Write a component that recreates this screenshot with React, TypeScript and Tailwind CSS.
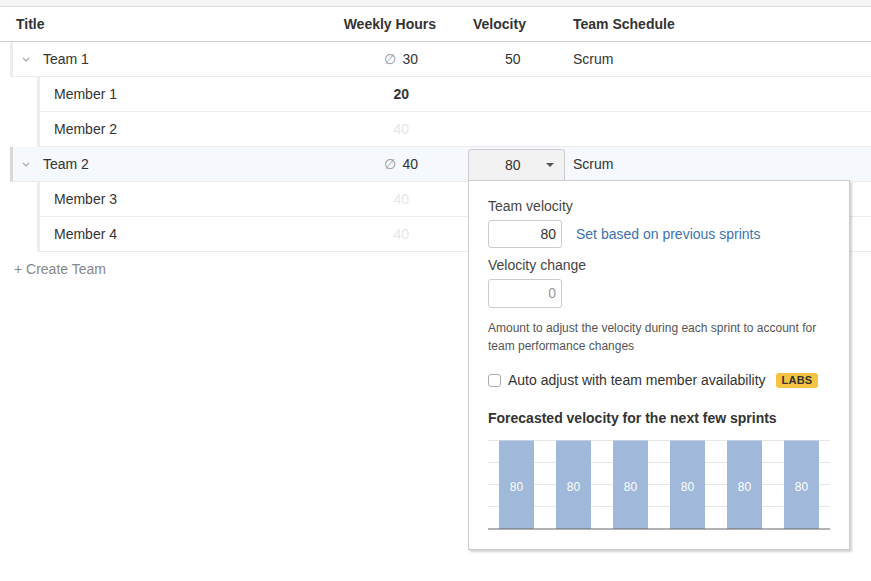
import React from 'react'

const TEAMS = [
  {
    name: 'Team 1',
    hours: 30,
    velocity: 50,
    selected: false,
    members: [
      { name: 'Member 1', hours: 20, explicit: true },
      { name: 'Member 2', hours: 40, explicit: false },
    ],
  },
  {
    name: 'Team 2',
    hours: 40,
    velocity: 80,
    selected: true,
    members: [
      { name: 'Member 3', hours: 40, explicit: false },
      { name: 'Member 4', hours: 40, explicit: false },
    ],
  },
]

function Chevron() {
  return (
    <svg width="8" height="5" viewBox="0 0 8 5" className="shrink-0">
      <path d="M1 1l3 3 3-3" fill="none" stroke="#a8a8a8" strokeWidth="1.2" />
    </svg>
  )
}

function ForecastChart() {
  const bars = [0, 1, 2, 3, 4, 5]
  return (
    <svg width="342" height="90" viewBox="0 0 342 90" className="block">
      {[0.5, 22.5, 44.5, 66.5].map((y) => (
        <line key={y} x1="0" x2="342" y1={y} y2={y} stroke="#e6e6e6" strokeWidth="1" />
      ))}
      {bars.map((i) => (
        <g key={i}>
          <rect x={11 + i * 57} y="0.5" width="35" height="88.5" fill="#a0b8d9" />
          <text
            x={11 + i * 57 + 17.5}
            y="51"
            textAnchor="middle"
            fill="#ffffff"
            fontSize="12"
            fontFamily="'Liberation Sans', Arial, sans-serif"
          >
            80
          </text>
        </g>
      ))}
      <line x1="0" x2="342" y1="89" y2="89" stroke="#666" strokeWidth="1" />
    </svg>
  )
}

function VelocityPopup() {
  return (
    <div className="absolute left-0 top-[calc(100%-1px)] z-10 w-[382px] h-[370px] bg-white border border-[#cccccc] shadow-[2px_2px_2px_rgba(0,0,0,0.18)] pl-[19px] pt-[17px] text-[#333]">
      <div className="text-[14px] leading-[17px] text-[#444]">Team velocity</div>
      <div className="mt-[5px] flex items-center">
        <div className="w-[74px] h-[28px] border border-[#cccccc] rounded-[3px] flex items-center justify-end pr-[5px] text-[14px] text-[#333]">
          80
        </div>
        <span className="ml-[14px] text-[14px] text-[#3b73af]">Set based on previous sprints</span>
      </div>
      <div className="mt-[9px] text-[14px] leading-[17px] text-[#444]">Velocity change</div>
      <div className="mt-[5px] w-[74px] h-[29px] border border-[#cccccc] rounded-[3px] flex items-center justify-end pr-[5px] text-[14px] text-[#999]">
        0
      </div>
      <div className="mt-[11px] text-[12px] leading-[18px] text-[#555] whitespace-nowrap">
        Amount to adjust the velocity during each sprint to account for
        <br />
        team performance changes
      </div>
      <div className="mt-[16px] h-[18px] flex items-center">
        <span className="w-[13px] h-[13px] border border-[#aaaaaa] rounded-[3px] bg-white shrink-0" />
        <span className="ml-[7px] text-[14px] text-[#333]">Auto adjust with team member availability</span>
        <span className="ml-[10px] h-[15px] px-[6px] rounded-[3px] bg-[#f6c342] text-[#333] text-[11px] font-bold leading-[15px] tracking-[0.02em]">
          LABS
        </span>
      </div>
      <div className="mt-[21px] text-[14px] leading-[17px] font-bold text-[#333]">
        Forecasted velocity for the next few sprints
      </div>
      <div className="mt-[13px]">
        <ForecastChart />
      </div>
    </div>
  )
}

export default function App() {
  return (
    <div className="relative w-[871px] h-[581px] bg-white overflow-hidden font-['Liberation_Sans',Arial,sans-serif] text-[14px] text-[#333]">
      <div className="h-[7px] bg-[#f5f5f5] border-b border-[#dddddd]" />

      {/* Header */}
      <div className="flex h-[35px] items-center border-b border-[#cccccc] font-bold text-[#333]">
        <div className="flex-1 pl-[16px]">Title</div>
        <div className="w-[138px] text-right pr-[32px]">Weekly Hours</div>
        <div className="w-[97px] pl-[5px]">Velocity</div>
        <div className="w-[306px] pl-[8px]">Team Schedule</div>
      </div>

      {TEAMS.map((team) => (
        <React.Fragment key={team.name}>
          <div
            className={
              team.selected
                ? 'flex h-[35px] items-center ml-[10px] border-l-[3px] border-l-[#d8d8d8] border-b border-b-[#ebebeb] bg-[#f5f8fc]'
                : 'flex h-[35px] items-center ml-[10px] border-l-[3px] border-l-[#ededed] border-b border-b-[#ebebeb]'
            }
          >
            <div className="flex-1 flex items-center pl-[9px]">
              <Chevron />
              <span className="ml-[13px]">{team.name}</span>
            </div>
            <div className="w-[138px] text-right pr-[50px]">
              <span className="text-[#999] mr-[6px]">∅</span>
              {team.hours}
            </div>
            {team.selected ? (
              <div className="relative w-[97px] self-stretch flex flex-col justify-end">
                <div className="h-[32px] bg-[#f2f2f2] border border-[#cccccc] rounded-t-[3px] flex items-center">
                  <span className="ml-[36px]">{team.velocity}</span>
                  <span className="ml-[25px] w-0 h-0 border-l-[4px] border-r-[4px] border-t-[4px] border-l-transparent border-r-transparent border-t-[#555]" />
                </div>
                <VelocityPopup />
              </div>
            ) : (
              <div className="w-[97px] pl-[37px]">{team.velocity}</div>
            )}
            <div className="w-[306px] pl-[8px]">Scrum</div>
          </div>
          {team.members.map((m) => (
            <div
              key={m.name}
              className="flex h-[35px] items-center ml-[37px] border-l-[3px] border-l-[#ededed] border-b border-b-[#ebebeb]"
            >
              <div className="flex-1 pl-[14px]">{m.name}</div>
              <div
                className={
                  m.explicit
                    ? 'w-[138px] text-right pr-[59px] font-bold text-[#333]'
                    : 'w-[138px] text-right pr-[59px] text-[#e3e7ec]'
                }
              >
                {m.hours}
              </div>
              <div className="w-[97px]" />
              <div className="w-[306px]" />
            </div>
          ))}
        </React.Fragment>
      ))}

      <div className="h-[35px] flex items-center pl-[14px] text-[#888]">+ Create Team</div>
    </div>
  )
}
